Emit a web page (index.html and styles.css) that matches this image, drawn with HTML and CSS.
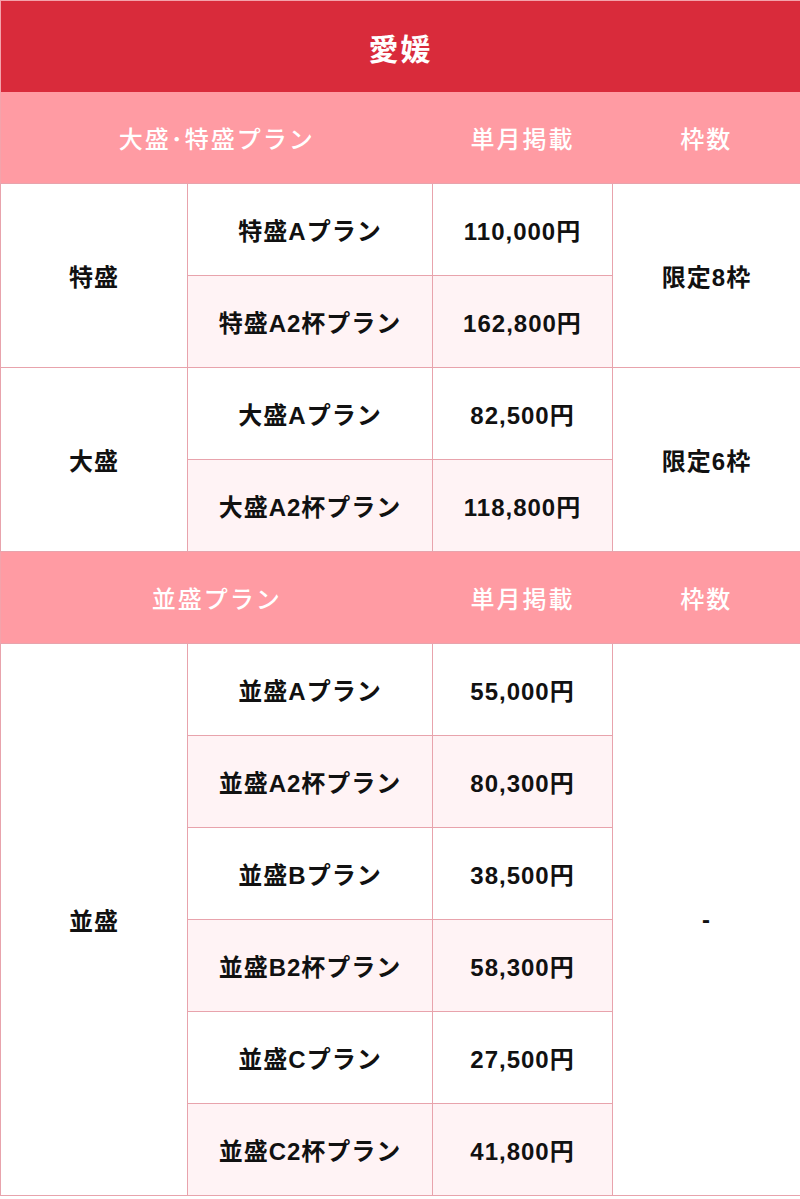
FILE: index.html
```html
<!DOCTYPE html>
<html lang="ja">
<head>
<meta charset="utf-8">
<title>愛媛</title>
<link rel="stylesheet" href="styles.css">
</head>
<body>
<table class="price">
  <colgroup>
    <col class="c1"><col class="c2"><col class="c3"><col class="c4">
  </colgroup>
  <tr class="title"><th colspan="4">愛媛</th></tr>
  <tr class="head"><th colspan="2">大盛･特盛プラン</th><th>単月掲載</th><th>枠数</th></tr>
  <tr><td rowspan="2">特盛</td><td>特盛Aプラン</td><td>110,000円</td><td rowspan="2">限定8枠</td></tr>
  <tr class="alt"><td>特盛A2杯プラン</td><td>162,800円</td></tr>
  <tr><td rowspan="2">大盛</td><td>大盛Aプラン</td><td>82,500円</td><td rowspan="2">限定6枠</td></tr>
  <tr class="alt"><td>大盛A2杯プラン</td><td>118,800円</td></tr>
  <tr class="head"><th colspan="2">並盛プラン</th><th>単月掲載</th><th>枠数</th></tr>
  <tr><td rowspan="6">並盛</td><td>並盛Aプラン</td><td>55,000円</td><td rowspan="6">-</td></tr>
  <tr class="alt"><td>並盛A2杯プラン</td><td>80,300円</td></tr>
  <tr><td>並盛Bプラン</td><td>38,500円</td></tr>
  <tr class="alt"><td>並盛B2杯プラン</td><td>58,300円</td></tr>
  <tr><td>並盛Cプラン</td><td>27,500円</td></tr>
  <tr class="alt"><td>並盛C2杯プラン</td><td>41,800円</td></tr>
</table>
</body>
</html>
```
FILE: styles.css
```css
html, body {
  margin: 0;
  padding: 0;
  background: #ffffff;
}
.price {
  width: 800px;
  border-collapse: collapse;
  table-layout: fixed;
  font-family: "Liberation Sans", "Noto Sans CJK JP", sans-serif;
  font-weight: bold;
  color: #111111;
  border: 1px solid #f3a3ab;
}
.c1 { width: 187px; }
.c2 { width: 245px; }
.c3 { width: 180px; }
.c4 { width: 188px; }
.price td, .price th {
  height: 91px;
  padding: 0;
  text-align: center;
  vertical-align: middle;
  font-size: 24px;
  letter-spacing: 1px;
}
.price td {
  border: 1px solid #e8a3ac;
}
.title th {
  background: #d92b3b;
  color: #ffffff;
  font-size: 30px;
  letter-spacing: 2px;
}
.head th {
  background: #ff9ba3;
  color: #ffffff;
  font-weight: 500;
  letter-spacing: 2px;
}
.alt td {
  background: #fff3f5;
}
```
